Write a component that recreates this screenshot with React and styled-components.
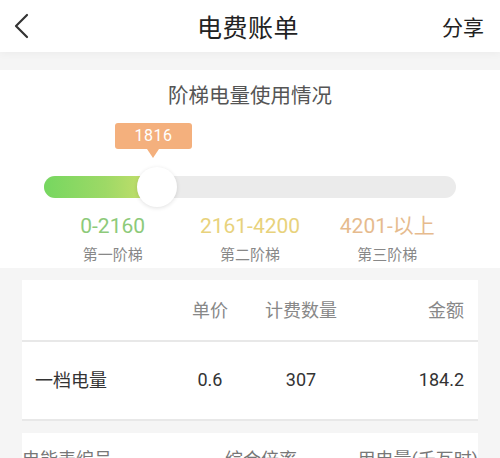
import React from 'react';
import styled, { createGlobalStyle } from 'styled-components';

const Global = createGlobalStyle`
  html, body {
    margin: 0;
    padding: 0;
    background: #f5f5f5;
    font-family: Roboto, "Noto Sans CJK SC", sans-serif;
  }
`;

const Page = styled.div`
  width: 500px;
  height: 458px;
  overflow: hidden;
  background: #f5f5f5;
`;

const Header = styled.div`
  height: 52px;
  background: #fff;
  display: flex;
  align-items: center;
  justify-content: space-between;
  padding: 0 16px 0 12px;
  box-shadow: 0 2px 8px rgba(0, 0, 0, 0.04);
  position: relative;
`;

const Side = styled.div`
  width: 60px;
  display: flex;
  align-items: center;
  justify-content: ${p => (p.right ? 'flex-end' : 'flex-start')};
  font-size: 21px;
  color: #222;
`;

const Title = styled.div`
  font-size: 25px;
  color: #222;
  letter-spacing: 0.5px;
`;

const Usage = styled.div`
  margin-top: 18px;
  background: #fff;
  padding: 12px 44px 0;
  height: 186px;
  display: flex;
  flex-direction: column;
  align-items: stretch;
`;

const UsageTitle = styled.div`
  text-align: center;
  font-size: 20.5px;
  color: #555;
  line-height: 28px;
`;

const TrackArea = styled.div`
  position: relative;
  height: 75px;
  margin-top: 13px;
`;

const Tooltip = styled.div`
  position: absolute;
  left: 71px;
  top: 0;
  width: 77px;
  height: 26px;
  border-radius: 3px;
  background: #f4b07d;
  color: #fff;
  font-size: 16px;
  line-height: 26px;
  text-align: center;
  letter-spacing: 0.5px;

  &::after {
    content: '';
    position: absolute;
    left: 32px;
    bottom: -9px;
    border-left: 6px solid transparent;
    border-right: 6px solid transparent;
    border-top: 9px solid #f4b07d;
  }
`;

const Track = styled.div`
  position: absolute;
  left: 0;
  right: 0;
  top: 53px;
  height: 22px;
  border-radius: 11px;
  background: #ebebeb;
  overflow: hidden;
`;

const Fill = styled.div`
  height: 100%;
  background: linear-gradient(90deg, #76d760 0%, #9ed966 55%, #cde06c 100%);
`;

const Knob = styled.div`
  position: absolute;
  top: 44px;
  width: 40px;
  height: 40px;
  margin-left: -20px;
  border-radius: 50%;
  background: #fff;
  box-shadow: 0 1px 4px rgba(0, 0, 0, 0.12);
`;

const Levels = styled.div`
  display: grid;
  grid-template-columns: repeat(3, 1fr);
  margin-top: 15px;
`;

const Level = styled.div`
  text-align: center;
`;

const Range = styled.div`
  font-size: 21px;
  line-height: 26px;
  color: ${p => p.color};
`;

const LevelName = styled.div`
  font-size: 15px;
  line-height: 22px;
  margin-top: 5px;
  color: #888;
`;

const Card = styled.div`
  margin: 12px 22px 0;
  background: #fff;
`;

const Row = styled.div`
  display: grid;
  grid-template-columns: 144px 62px 120px 1fr;
  align-items: center;
  height: ${p => p.h}px;
  padding: 0 14px ${p => (p.head ? 3 : 3)}px 13px;
  box-sizing: border-box;
  border-bottom: 2px solid #e8e8e8;
  font-size: 18px;
  color: ${p => (p.head ? '#888' : '#333')};
`;

const Cell = styled.div`
  text-align: ${p => p.align || 'center'};
  white-space: nowrap;
`;

const MeterCard = styled.div`
  margin: 12px 22px 0;
  background: #fff;
  display: grid;
  grid-template-columns: 150px 178px 1fr;
  padding-top: 12px;
  font-size: 18px;
  color: #777;
`;

const levels = [
  { range: '0-2160', name: '第一阶梯', color: '#8dca7a' },
  { range: '2161-4200', name: '第二阶梯', color: '#e8d27c' },
  { range: '4201-以上', name: '第三阶梯', color: '#e6bb8e' },
];

export default function App() {
  const pct = 27.4;
  return (
    <Page>
      <Global />
      <Header>
        <Side>
          <svg width="18" height="26" viewBox="0 0 18 26">
            <path d="M15 2 L4 13 L15 24" fill="none" stroke="#333" strokeWidth="2.2" strokeLinecap="round" strokeLinejoin="round" />
          </svg>
        </Side>
        <Title>电费账单</Title>
        <Side right>分享</Side>
      </Header>

      <Usage>
        <UsageTitle>阶梯电量使用情况</UsageTitle>
        <TrackArea>
          <Tooltip>1816</Tooltip>
          <Track>
            <Fill style={{ width: `${pct}%` }} />
          </Track>
          <Knob style={{ left: `${pct}%` }} />
        </TrackArea>
        <Levels>
          {levels.map(l => (
            <Level key={l.name}>
              <Range color={l.color}>{l.range}</Range>
              <LevelName>{l.name}</LevelName>
            </Level>
          ))}
        </Levels>
      </Usage>

      <Card>
        <Row head h={62}>
          <Cell align="left"></Cell>
          <Cell>单价</Cell>
          <Cell>计费数量</Cell>
          <Cell align="right">金额</Cell>
        </Row>
        <Row h={79}>
          <Cell align="left">一档电量</Cell>
          <Cell>0.6</Cell>
          <Cell>307</Cell>
          <Cell align="right">184.2</Cell>
        </Row>
      </Card>

      <MeterCard>
        <Cell align="left">电能表编号</Cell>
        <Cell>综合倍率</Cell>
        <Cell align="right">用电量(千瓦时)</Cell>
      </MeterCard>
    </Page>
  );
}
